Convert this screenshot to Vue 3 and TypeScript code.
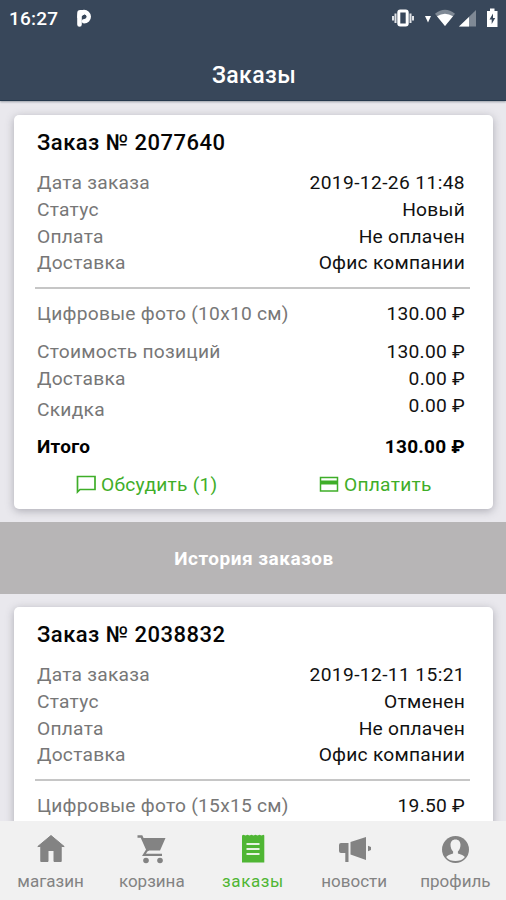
<script setup lang="ts">
interface Row {
  label: string
  value: string
  offset?: boolean
  date?: boolean
}
interface Order {
  id: string
  info: Row[]
  item: Row
  costs: Row[]
  total: string
  messages: number
}

const costs = (sum: string): Row[] => [
  { label: 'Стоимость позиций', value: sum },
  { label: 'Доставка', value: '0.00 ₽' },
  { label: 'Скидка', value: '0.00 ₽', offset: true },
]

const current: Order = {
  id: '2077640',
  info: [
    { label: 'Дата заказа', value: '2019-12-26 11:48', date: true },
    { label: 'Статус', value: 'Новый' },
    { label: 'Оплата', value: 'Не оплачен' },
    { label: 'Доставка', value: 'Офис компании' },
  ],
  item: { label: 'Цифровые фото (10x10 см)', value: '130.00 ₽' },
  costs: costs('130.00 ₽'),
  total: '130.00 ₽',
  messages: 1,
}

const past: Pick<Order, 'id' | 'info' | 'item'> = {
  id: '2038832',
  info: [
    { label: 'Дата заказа', value: '2019-12-11 15:21', date: true },
    { label: 'Статус', value: 'Отменен' },
    { label: 'Оплата', value: 'Не оплачен' },
    { label: 'Доставка', value: 'Офис компании' },
  ],
  item: { label: 'Цифровые фото (15x15 см)', value: '19.50 ₽' },
}

const tabs = [
  { id: 'shop', label: 'магазин' },
  { id: 'cart', label: 'корзина' },
  { id: 'orders', label: 'заказы' },
  { id: 'news', label: 'новости' },
  { id: 'profile', label: 'профиль' },
]
const active = 'orders'
</script>

<template>
  <div class="screen">
    <header class="top">
      <div class="status">
        <span class="clock">16:27</span>
        <svg class="parking" viewBox="0 0 16 19">
          <path d="M3.500 15.500V8a4.600 4.600 0 1 1 4.600 4.300" fill="none" stroke="#fff" stroke-width="4.600" stroke-linejoin="round" stroke-linecap="round" />
          <path d="M1.200 9V4q0-3 3-3H8v5z" fill="#fff" />
          <circle cx="8.400" cy="7.600" r="1.900" fill="#38475a" />
        </svg>
        <svg class="tray" viewBox="0 0 110 22">
          <path d="M3 9v4.500M5.500 6.500v9.500M20.500 6.500v9.500M23 9v4.500" stroke="#dfe2e6" stroke-width="2" />
          <rect x="8.800" y="4" width="8.400" height="14" rx="1.500" fill="none" stroke="#fff" stroke-width="3" />
          <path d="M35 9h6l-3 6.500z" fill="#fff" />
          <path d="M45 6.800Q55-1.500 65 6.800L55 19z" fill="#7f8995" />
          <path d="M47 9.300Q55 4 63 9.300L55 19z" fill="#fff" />
          <path d="M69 19.500L86 3v16.500z" fill="#7f8995" />
          <path d="M69 19.500L79 10v9.500z" fill="#fff" />
          <path d="M97 4h3V1.500h4.500V4h3v16H97z" fill="#fff" />
          <path d="M103 6.500l-3.500 6h2.200v4.500l3.500-6h-2.200z" fill="#38475a" />
        </svg>
      </div>
      <h1>Заказы</h1>
    </header>

    <main class="feed">
      <article class="card">
        <h2>Заказ № {{ current.id }}</h2>
        <div v-for="r in current.info" :key="r.label" class="row" :class="{ date: r.date }">
          <span>{{ r.label }}</span><b>{{ r.value }}</b>
        </div>
        <hr />
        <div class="row item"><span>{{ current.item.label }}</span><b>{{ current.item.value }}</b></div>
        <div v-for="r in current.costs" :key="r.label" class="row" :class="{ offset: r.offset }">
          <span>{{ r.label }}</span><b>{{ r.value }}</b>
        </div>
        <div class="row total"><span>Итого</span><b>{{ current.total }}</b></div>
        <div class="actions">
          <a class="discuss">
            <svg viewBox="0 0 20 20"><path d="M1.500 17V1.500H19V14.500H4z" fill="none" stroke="#3fae29" stroke-width="1.700" /></svg>
            <span>Обсудить ({{ current.messages }})</span>
          </a>
          <a class="pay">
            <svg viewBox="0 0 20 20"><path d="M1.500 2.500h17v13.500h-17z" fill="none" stroke="#3fae29" stroke-width="1.500" /><path d="M1 5.500h18v4H1z" fill="#3fae29" /></svg>
            <span>Оплатить</span>
          </a>
        </div>
      </article>

      <div class="band">История заказов</div>

      <article class="card">
        <h2>Заказ № {{ past.id }}</h2>
        <div v-for="r in past.info" :key="r.label" class="row" :class="{ date: r.date }">
          <span>{{ r.label }}</span><b>{{ r.value }}</b>
        </div>
        <hr />
        <div class="row item"><span>{{ past.item.label }}</span><b>{{ past.item.value }}</b></div>
      </article>
    </main>

    <nav class="tabs">
      <a v-for="t in tabs" :key="t.id" :class="{ active: t.id === active }">
        <svg viewBox="0 0 34 32">
          <path v-if="t.id === 'shop'" d="M17 2.500L3.800 13.500h3V28.500H14V17.500h6V28.500h7.200V13.500h3z" stroke="currentColor" stroke-linejoin="round" />
          <g v-else-if="t.id === 'cart'">
            <path d="M2.500 3.500H6.500L13 18" fill="none" stroke="currentColor" stroke-width="2.500" />
            <path d="M7 5h23.500L25 17.500H12z" />
            <path d="M12 17l-3 4.800h18" fill="none" stroke="currentColor" stroke-width="2.200" />
            <circle cx="11" cy="27.500" r="2.800" /><circle cx="25" cy="27.500" r="2.800" />
          </g>
          <g v-else-if="t.id === 'orders'">
            <path d="M6 2.500l1.500-.8 2 .8 2-.8 2 .8 2-.8 2 .8 2-.8 2 .8 2-.8 2 .8 2-.8.8.8v27H6z" />
            <path d="M10.500 11h13M10.500 16h13M10.500 21h13" stroke="#e6f3e2" stroke-width="2" />
          </g>
          <g v-else-if="t.id === 'news'">
            <path d="M2 12q0-2 2-2h7.500v19H8.300v-9H4q-2 0-2-2zM13.500 9L29 4v23l-15.500-5.500zM31 12.800l3 1.200v3l-3 1.200z" />
          </g>
          <g v-else>
            <circle cx="17.500" cy="16.500" r="13.500" />
            <path d="M17.500 6.500c-3.200 0-5 2.200-5 5.300 0 3 1.100 5.200 2.600 6.600v2c-3 1.200-6 1.800-7 3.600 2.300 3 5.800 4 9.400 4s7.100-1 9.400-4c-1-1.800-4-2.400-7-3.600v-2c1.500-1.400 2.600-3.600 2.600-6.600 0-3.100-1.800-5.300-5-5.300z" fill="#f1f1f1" />
          </g>
        </svg>
        <span>{{ t.label }}</span>
      </a>
    </nav>
  </div>
</template>

<style>
body {
  margin: 0;
  overflow: hidden;
}
</style>

<style scoped>
.screen {
  width: 506px;
  height: 900px;
  display: flex;
  flex-direction: column;
  overflow: hidden;
  background: #e9e8ed;
  font-family: Roboto, 'Liberation Sans', sans-serif;
  font-size: 19.200px;
  letter-spacing: 0.250px;
}
.top {
  flex: none;
  height: 101px;
  box-sizing: border-box;
  background: #38475a;
  border-bottom: 1px solid #25384c;
  color: #fff;
  box-shadow: 0 1px 2px #9a9fa7;
}
.status {
  height: 36px;
  display: flex;
  align-items: center;
  padding: 0 6px 0 9px;
}
.clock {
  font-size: 19px;
  letter-spacing: 0.2px;
  font-weight: 500;
  width: 67px;
}
.parking {
  width: 16px;
  height: 19px;
}
.tray {
  width: 110px;
  height: 22px;
  margin-left: auto;
}
h1 {
  margin: 0;
  text-align: center;
  font-size: 23px;
  line-height: 27px;
  padding: 26px 0 0 2px;
  font-weight: 500;
  letter-spacing: 0.4px;
}
.feed {
  flex: 1;
  min-height: 0;
  overflow: hidden;
  padding-top: 14px;
}
.card {
  margin: 0 13px 0 14px;
  height: 393.500px;
  box-sizing: border-box;
  padding: 14px 28px 0 23px;
  background: #fff;
  border-radius: 5px;
  box-shadow: 0 2px 8px rgba(60, 60, 75, 0.35);
}
h2 {
  margin: 0 0 13.400px;
  font-size: 22px;
  line-height: 28px;
  font-weight: 500;
  letter-spacing: 0.470px;
  color: #050505;
}
.row {
  display: flex;
  justify-content: space-between;
  height: 26.700px;
  line-height: 26.700px;
  color: #777;
  white-space: nowrap;
}
.row b {
  font-weight: 400;
  color: #111;
}
.row.date b {
  letter-spacing: 0.380px;
}
hr {
  border: 0;
  height: 2px;
  background: #c6c6c6;
  margin: 9.800px -5px 11.800px -2px;
}
.item {
  margin-bottom: 12px;
}
.offset span {
  padding-top: 4px;
}
.row.total {
  margin-top: 14.500px;
  color: #000;
  font-size: 19px;
  font-weight: 700;
}
.row.total b {
  font-weight: 700;
  color: #000;
}
.actions {
  display: flex;
  margin: 11px 0 0 39px;
  line-height: 26px;
  color: #3fae29;
  font-size: 19.200px;
}
.actions a {
  display: flex;
  align-items: center;
  gap: 5px;
  white-space: nowrap;
}
.discuss {
  width: 243px;
}
.actions svg {
  width: 20px;
  height: 20px;
}
.band {
  height: 72px;
  line-height: 74px;
  margin: 13.500px 0 13px;
  padding-left: 2px;
  background: #b7b5b6;
  color: #fff;
  font-size: 19px;
  letter-spacing: 0.500px;
  font-weight: 700;
  text-align: center;
}
.tabs {
  flex: none;
  height: 79px;
  display: grid;
  grid-template-columns: repeat(5, 1fr);
  background: #f1f1f1;
  color: #838383;
  font-size: 17px;
  letter-spacing: 0;
}
.tabs a {
  display: flex;
  flex-direction: column;
  align-items: center;
  padding-top: 12px;
}
.tabs svg {
  width: 34px;
  height: 32px;
  fill: currentColor;
}
.tabs span {
  line-height: 22px;
  margin-top: 5px;
}
.tabs .active {
  color: #4fb634;
  letter-spacing: 0.600px;
}
</style>
